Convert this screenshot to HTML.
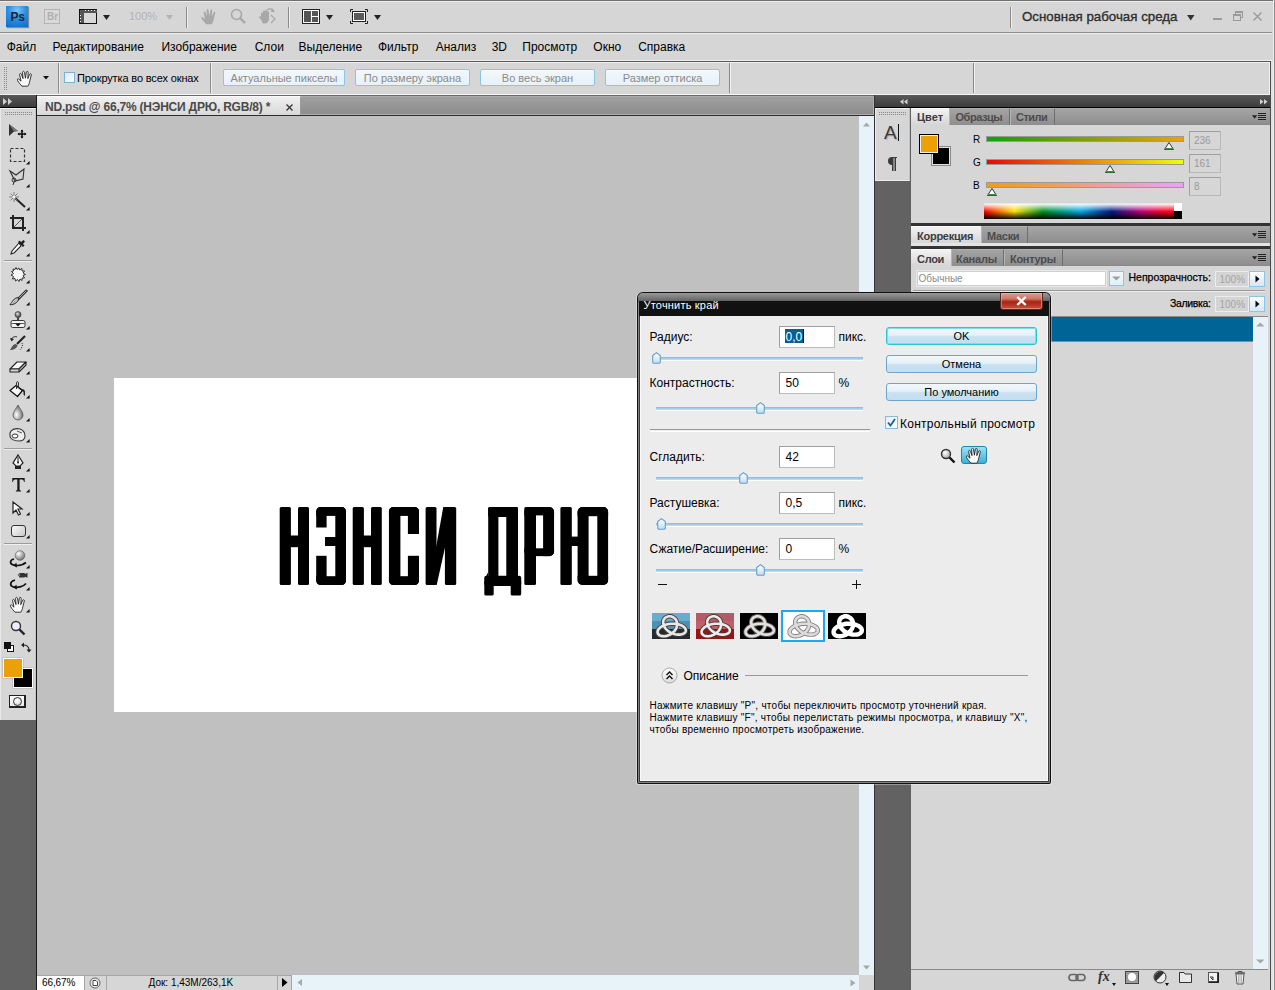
<!DOCTYPE html>
<html><head><meta charset="utf-8">
<style>
*{margin:0;padding:0;box-sizing:border-box}
html,body{width:1275px;height:990px;overflow:hidden;background:#d6d6d6;font-family:"Liberation Sans",sans-serif;font-size:12px;color:#000;position:relative}
.a{position:absolute}
.t{position:absolute;white-space:nowrap;line-height:1}
svg{position:absolute;overflow:visible}
.sep{position:absolute;width:1px;background:#8a8a8a;border-right:1px solid #f0f0f0;width:2px}
.ob{position:absolute;top:69px;height:17px;border:1px solid #8ec4e4;border-radius:2px;background:linear-gradient(#f2f8fc,#e6f1f9);color:#8a8a8a;font-size:11px;text-align:center;line-height:16px}
.tab{position:absolute;font-weight:bold;font-size:11px;color:#3c3c3c;line-height:1;white-space:nowrap}
.itab{position:absolute;background:linear-gradient(#a3a3a3,#8e8e8e);border-left:1px solid #b4b4b4;border-right:1px solid #6e6e6e}
.btn{position:absolute;left:886px;width:151px;height:18px;border:1px solid #6ea5c8;border-radius:3px;background:linear-gradient(#f3f9fd 0%,#e4f0f8 45%,#c9e1f1 55%,#c4def0 100%);font-size:11px;text-align:center;line-height:16px;color:#000}
.inp{position:absolute;left:779px;width:56px;height:22px;background:#fff;border:1px solid #8c8c8c;border-color:#a0a0a0 #bcbcbc #bcbcbc #a0a0a0}
.trk{position:absolute;height:4px;background:#a9cbe4;border-top:1px solid #8cbde0;border-bottom:1px solid #fff}
.thumb{position:absolute;width:9px;height:12px;border:1px solid #6a9cc4;border-radius:4px 4px 2px 2px;background:linear-gradient(90deg,#dbeaf6,#f4f9fd 50%,#c2dcef)}
</style></head><body>
<!-- ===== APP BAR ===== -->
<div class="a" style="left:0;top:0;width:1275px;height:1px;background:#707070"></div>

<div class="a" style="left:0;top:32px;width:1272px;height:1px;background:#8c8c8c"></div>
<div class="a" style="left:0;top:33px;width:1272px;height:1px;background:#ececec"></div>

<div class="a" style="left:0;top:1px;width:1272px;height:1px;background:#eeeeee"></div>
<div class="a" style="left:6px;top:6px;width:22px;height:21px;background:radial-gradient(circle at 50% 20%,#7cc4f6 0%,#2b8fe0 45%,#0a6cc4 100%);box-shadow:1px 1px 1px rgba(0,0,0,.35)"></div>
<div class="t" style="left:10.5px;top:10.5px;font-size:12px;font-weight:bold;color:#1a2636;letter-spacing:-0.2px">Ps</div>
<div class="a" style="left:44px;top:9px;width:16px;height:15px;border:1px solid #b4b4b4;background:#d9d9d9"></div>
<div class="t" style="left:47px;top:12px;font-size:10px;font-weight:bold;color:#b0b0b0">Br</div>
<svg style="left:79px;top:9px" width="19" height="15" viewBox="0 0 19 15">
 <rect x="0.5" y="0.5" width="17" height="14" fill="#d8d8d8" stroke="#111"/>
 <rect x="1" y="1" width="17" height="3" fill="#555"/>
 <rect x="1" y="1" width="4" height="13" fill="#555"/>
 <rect x="6" y="1" width="1" height="1" fill="#fff"/><rect x="9" y="1" width="1" height="1" fill="#fff"/><rect x="12" y="1" width="1" height="1" fill="#fff"/><rect x="15" y="1" width="1" height="1" fill="#fff"/>
 <rect x="1" y="6" width="1" height="1" fill="#fff"/><rect x="1" y="9" width="1" height="1" fill="#fff"/><rect x="1" y="12" width="1" height="1" fill="#fff"/>
</svg>
<svg style="left:103px;top:15px" width="8" height="5"><path d="M0 0H7L3.5 5Z" fill="#222"/></svg>
<div class="t" style="left:129px;top:11px;font-size:11px;color:#b4b4b4">100%</div>
<svg style="left:166px;top:15px" width="8" height="5"><path d="M0 0H7L3.5 5Z" fill="#b4b4b4"/></svg>
<div class="sep" style="left:186px;top:7px;height:21px"></div>
<svg style="left:200px;top:8px" width="18" height="17" viewBox="0 0 18 17"><path d="M6 16.2C4.5 14.5 3 13 1.6 10.6C1 9.6 1.6 8.6 2.6 9L5 11.2L3.6 4.6C3.3 3.4 5 3 5.4 4.2L7 8.6L6.6 2.4C6.5 1.1 8.3 1 8.5 2.3L9.4 8.2L10.4 2.2C10.6 1 12.3 1.2 12.2 2.5L11.8 8.6L13.6 4.4C14.1 3.3 15.7 3.8 15.3 5L13.9 10.6C13.4 13 13 14.5 11.8 16.2Z" fill="#a8a8a8"/></svg>
<svg style="left:230px;top:8px" width="17" height="17" viewBox="0 0 17 17"><circle cx="6.5" cy="6.5" r="5" fill="none" stroke="#a8a8a8" stroke-width="1.6"/><path d="M10 10L15 15" stroke="#a8a8a8" stroke-width="2.4"/></svg>
<svg style="left:258px;top:7px" width="19" height="18" viewBox="0 0 19 18"><path d="M3 10V6.5a1 1 0 0 1 2 0V9V4.5a1 1 0 0 1 2 0V9V4a1 1 0 0 1 2 0V9V5a1 1 0 0 1 2 0V11c0 3.5-1.6 5.5-4.5 5.5S4.8 15.5 3.2 13L1 10.5a1 1 0 0 1 1.6-1z" fill="#a8a8a8"/><path d="M9 3C12 1 15 2 16 5" fill="none" stroke="#a8a8a8" stroke-width="1.2"/><path d="M14 1l3 4-4 0z" fill="#a8a8a8"/><path d="M13 8l4 4-4 4" fill="none" stroke="#a8a8a8" stroke-width="1.2"/></svg>
<div class="sep" style="left:288px;top:7px;height:21px"></div>
<svg style="left:302px;top:9px" width="19" height="16" viewBox="0 0 19 16"><rect x="0.5" y="0.5" width="17" height="14" fill="#fff" stroke="#222"/><rect x="2" y="2" width="7" height="11" fill="#555"/><rect x="10" y="2" width="6" height="5" fill="#555"/><rect x="10" y="8" width="6" height="5" fill="#555"/></svg>
<svg style="left:326px;top:15px" width="8" height="5"><path d="M0 0H7L3.5 5Z" fill="#222"/></svg>
<svg style="left:350px;top:9px" width="19" height="16" viewBox="0 0 19 16"><path d="M0.5 3V0.5H3M15 0.5H17.5V3M17.5 12V14.5H15M3 14.5H0.5V12" fill="none" stroke="#222"/><rect x="2.5" y="2.5" width="13" height="10" fill="#fff" stroke="#222"/><rect x="4" y="4" width="10" height="7" fill="#5a5a5a"/></svg>
<svg style="left:374px;top:15px" width="8" height="5"><path d="M0 0H7L3.5 5Z" fill="#222"/></svg>
<div class="sep" style="left:1010px;top:7px;height:21px"></div>
<div class="t" style="left:1022px;top:10px;font-size:13.3px;color:#2e2e2e;-webkit-text-stroke:0.35px #2e2e2e">Основная рабочая среда</div>
<svg style="left:1187px;top:15px" width="8" height="6"><path d="M0 0H7.5L3.75 5.5Z" fill="#333"/></svg>
<div class="a" style="left:1213px;top:18px;width:9px;height:2px;background:#9a9a9a"></div>
<svg style="left:1233px;top:11px" width="10" height="10" viewBox="0 0 10 10"><rect x="2.5" y="0.5" width="7" height="6" fill="none" stroke="#9a9a9a"/><rect x="2.5" y="0.5" width="7" height="1.5" fill="#9a9a9a"/><rect x="0.5" y="3.5" width="7" height="6" fill="#d6d6d6" stroke="#9a9a9a"/><rect x="0.5" y="3.5" width="7" height="1.5" fill="#9a9a9a"/></svg>
<svg style="left:1253px;top:12px" width="9" height="9" viewBox="0 0 9 9"><path d="M0.5 0.5L8.5 8.5M8.5 0.5L0.5 8.5" stroke="#9a9a9a" stroke-width="1.4"/></svg>

<!-- ===== MENU ===== -->
<div class="t" style="left:6.7px;top:40.5px;font-size:12px">Файл</div>
<div class="t" style="left:52.5px;top:40.5px;font-size:12px">Редактирование</div>
<div class="t" style="left:161.4px;top:40.5px;font-size:12px">Изображение</div>
<div class="t" style="left:254.7px;top:40.5px;font-size:12px">Слои</div>
<div class="t" style="left:298.6px;top:40.5px;font-size:12px">Выделение</div>
<div class="t" style="left:378.0px;top:40.5px;font-size:12px">Фильтр</div>
<div class="t" style="left:435.7px;top:40.5px;font-size:12px">Анализ</div>
<div class="t" style="left:491.7px;top:40.5px;font-size:12px">3D</div>
<div class="t" style="left:522.3px;top:40.5px;font-size:12px">Просмотр</div>
<div class="t" style="left:593.3px;top:40.5px;font-size:12px">Окно</div>
<div class="t" style="left:638.2px;top:40.5px;font-size:12px">Справка</div>

<!-- ===== OPTIONS BAR ===== -->
<div class="a" style="left:0;top:60px;width:1272px;height:1px;background:#f0f0f0"></div>
<div class="a" style="left:0;top:61px;width:1271px;height:1px;background:#555"></div>
<div class="a" style="left:0;top:62px;width:1269px;height:1px;background:#f2f2f2"></div>
<div class="a" style="left:1269px;top:62px;width:1px;height:33px;background:#f2f2f2"></div>

<div class="a" style="left:0;top:94px;width:1272px;height:1px;background:#f4f4f4"></div>

<svg style="left:4px;top:67px" width="3" height="24"><defs><pattern id="gpo" width="2" height="2" patternUnits="userSpaceOnUse"><rect width="1" height="1" fill="#8a8a8a"/></pattern></defs><rect width="3" height="24" fill="url(#gpo)"/></svg>
<svg style="left:16px;top:70px" width="18" height="17" viewBox="0 0 18 17"><path d="M6 16.2C4.5 14.5 3 13 1.6 10.6C1 9.6 1.6 8.6 2.6 9L5 11.2L3.6 4.6C3.3 3.4 5 3 5.4 4.2L7 8.6L6.6 2.4C6.5 1.1 8.3 1 8.5 2.3L9.4 8.2L10.4 2.2C10.6 1 12.3 1.2 12.2 2.5L11.8 8.6L13.6 4.4C14.1 3.3 15.7 3.8 15.3 5L13.9 10.6C13.4 13 13 14.5 11.8 16.2Z" fill="#fafafa" stroke="#222" stroke-width="0.9"/></svg>
<svg style="left:43px;top:76px" width="6" height="4"><path d="M0 0H6L3 3.5Z" fill="#111"/></svg>
<div class="sep" style="left:58px;top:63px;height:30px"></div>
<div class="a" style="left:64px;top:72px;width:11px;height:11px;border:1px solid #7fb2d8;background:linear-gradient(135deg,#dcecf8,#f8fbfe)"></div>
<div class="t" style="left:77px;top:72.6px;font-size:11px;letter-spacing:-0.14px">Прокрутка во всех окнах</div>
<div class="sep" style="left:210px;top:63px;height:30px"></div>
<div class="ob" style="left:223px;width:122px">Актуальные пикселы</div>
<div class="ob" style="left:355px;width:115px">По размеру экрана</div>
<div class="ob" style="left:480px;width:115px">Во весь экран</div>
<div class="ob" style="left:605px;width:115px">Размер оттиска</div>
<div class="sep" style="left:729px;top:63px;height:30px"></div>
<div class="sep" style="left:973px;top:63px;height:30px"></div>

<!-- ===== DARK BG ===== -->
<div class="a" style="left:0;top:95px;width:1275px;height:895px;background:#626262"></div>

<div class="a" style="left:0;top:95px;width:36px;height:12px;background:linear-gradient(#585858,#3c3c3c)"></div>
<svg style="left:3px;top:98px" width="10" height="7"><path d="M0 0L4 3.5L0 7ZM5 0L9 3.5L5 7Z" fill="#d0d0d0"/></svg>
<div class="a" style="left:0;top:107px;width:36px;height:1px;background:#000"></div>
<div class="a" style="left:0;top:108px;width:36px;height:612px;background:#d6d6d6;border-top:1px solid #f2f2f2;border-left:1px solid #e8e8e8;border-right:1px solid #c4c4c4"></div>
<svg style="left:5px;top:112px" width="27" height="3"><defs><pattern id="gp5112" width="2" height="2" patternUnits="userSpaceOnUse"><rect width="1" height="1" fill="#8a8a8a"/></pattern></defs><rect width="27" height="3" fill="url(#gp5112)"/></svg>
<div class="a" style="left:36px;top:95px;width:1px;height:895px;background:#1a1a1a"></div>
<!-- icons -->
<svg style="left:8px;top:123px" width="20" height="16" viewBox="0 0 20 16"><path d="M1 1L10 8L6 8.5L1 13Z" fill="#333"/><path d="M1 1L10 8L6 8.5Z" fill="#777"/><path d="M14 7V15M10 11H18" stroke="#111" stroke-width="1.6"/><path d="M12.5 8.5L14 6.5L15.5 8.5ZM12.5 13.5L14 15.5L15.5 13.5ZM11.5 9.5L9.5 11L11.5 12.5ZM16.5 9.5L18.5 11L16.5 12.5Z" fill="#111"/></svg>
<svg style="left:9px;top:147px" width="17" height="16"><rect x="1.5" y="1.5" width="14" height="13" fill="none" stroke="#333" stroke-width="1.2" stroke-dasharray="3 2"/></svg>
<svg style="left:26px;top:161px" width="4" height="4"><path d="M3.6 0V3.6H0Z" fill="#111"/></svg>
<svg style="left:9px;top:168px" width="18" height="18" viewBox="0 0 18 18"><path d="M1 3L7 7L15 1L14 11L6 13L1 3Z" fill="none" stroke="#333" stroke-width="1.1"/><circle cx="5" cy="12" r="2" fill="none" stroke="#333"/><path d="M5 14L4 17" stroke="#333"/></svg>
<svg style="left:26px;top:184px" width="4" height="4"><path d="M3.6 0V3.6H0Z" fill="#111"/></svg>
<svg style="left:8px;top:191px" width="19" height="17" viewBox="0 0 19 17"><path d="M6 6L17 16" stroke="#222" stroke-width="2"/><path d="M6 1V11M1 6H11M2.5 2.5L9.5 9.5M9.5 2.5L2.5 9.5" stroke="#777" stroke-width="0.9"/><circle cx="6" cy="6" r="1.5" fill="#fff"/></svg>
<svg style="left:26px;top:207px" width="4" height="4"><path d="M3.6 0V3.6H0Z" fill="#111"/></svg>
<svg style="left:9px;top:215px" width="18" height="17" viewBox="0 0 18 17"><path d="M4 0V13H17M1 3H14V16" fill="none" stroke="#222" stroke-width="2"/><path d="M5 12L13 4" stroke="#555" stroke-width="1"/></svg>
<svg style="left:26px;top:230px" width="4" height="4"><path d="M3.6 0V3.6H0Z" fill="#111"/></svg>
<svg style="left:9px;top:239px" width="18" height="17" viewBox="0 0 18 17"><path d="M10 4L3 12L2 15L5 14L12 7Z" fill="#fff" stroke="#222" stroke-width="1.1"/><path d="M9 3L14 8L15.5 6.5L14 5L16 2.5L14.5 1L12 3L10.5 1.5Z" fill="#222"/></svg>
<svg style="left:26px;top:253px" width="4" height="4"><path d="M3.6 0V3.6H0Z" fill="#111"/></svg>
<div class="a" style="left:4px;top:260px;width:28px;height:1px;background:#9a9a9a;border-bottom:1px solid #f0f0f0;height:2px"></div>
<svg style="left:10px;top:266px" width="17" height="17" viewBox="0 0 17 17"><path d="M3 3L5 3.5L6 1.5L7 3.5L9 2L9.5 4L12 2.5L12 5L14.5 5L13 7L15.5 8.5L13 9.5L14.5 12L12 12L12 14.5L10 13L9 15.5L7.5 13.5L5.5 15L5 12.5L2.5 13L3.5 10.5L1 9L3.5 7.5L1.5 5.5L3.5 5Z" fill="#f6f6f6" stroke="#333" stroke-width="1" stroke-linejoin="round"/></svg>
<svg style="left:26px;top:280px" width="4" height="4"><path d="M3.6 0V3.6H0Z" fill="#111"/></svg>
<svg style="left:9px;top:290px" width="19" height="16" viewBox="0 0 19 16"><path d="M17.3 0.8L9.3 8.8" stroke="#222" stroke-width="2.6" stroke-linecap="round"/><path d="M17.3 0.8L9.3 8.8" stroke="#bdbdbd" stroke-width="1"/><path d="M8.6 7.6C5 8 3.5 11.5 1 14.8C4.8 14.8 9 12.6 9.8 9Z" fill="#b8b8b8" stroke="#222" stroke-width="1"/><path d="M7 9.5C5 10.5 4 12 3 13.5" stroke="#f4f4f4" stroke-width="1"/></svg>
<svg style="left:26px;top:302px" width="4" height="4"><path d="M3.6 0V3.6H0Z" fill="#111"/></svg>
<svg style="left:9px;top:311px" width="18" height="18" viewBox="0 0 18 18"><defs><radialGradient id="stg" cx="40%" cy="35%" r="60%"><stop offset="0" stop-color="#ddd"/><stop offset="1" stop-color="#444"/></radialGradient></defs><circle cx="9" cy="3.6" r="3" fill="url(#stg)" stroke="#333" stroke-width="0.7"/><rect x="8" y="6.2" width="2" height="3.5" fill="#444"/><rect x="2" y="9.5" width="14" height="7" rx="1.8" fill="#f4f4f4" stroke="#333" stroke-width="1"/><path d="M2.5 12.5H15.5" stroke="#333" stroke-width="0.8"/><path d="M6 12.5H12L9 15.5Z" fill="#111"/></svg>
<svg style="left:26px;top:326px" width="4" height="4"><path d="M3.6 0V3.6H0Z" fill="#111"/></svg>
<svg style="left:9px;top:335px" width="18" height="17" viewBox="0 0 18 17"><path d="M16 1L8 9" stroke="#222" stroke-width="2.2"/><path d="M7 9C4 9 3 12 1 15C5 15 8 13 8.5 10.5Z" fill="#555"/><path d="M2 5C3 2 6 1 8 2" fill="none" stroke="#222"/><path d="M1 3L2.5 6.5L5 4Z" fill="#222"/><path d="M13 8C14 10 13 13 11 15" fill="none" stroke="#222" stroke-dasharray="1 1"/></svg>
<svg style="left:26px;top:348px" width="4" height="4"><path d="M3.6 0V3.6H0Z" fill="#111"/></svg>
<svg style="left:9px;top:360px" width="18" height="14" viewBox="0 0 18 14"><path d="M1 9L8 2H17L10 9Z" fill="#fafafa" stroke="#222" stroke-width="1.1" stroke-linejoin="round"/><path d="M1 9V12H10L17 5V2L10 9Z" fill="#d8d8d8" stroke="#222" stroke-width="1.1" stroke-linejoin="round"/><path d="M10 9V12" stroke="#222"/></svg>
<svg style="left:26px;top:371px" width="4" height="4"><path d="M3.6 0V3.6H0Z" fill="#111"/></svg>
<svg style="left:9px;top:381px" width="18" height="17" viewBox="0 0 18 17"><path d="M1 9.5L7 4.5L13.5 9.5L8.5 15.5Z" fill="#f6f6f6" stroke="#111" stroke-width="1.2" stroke-linejoin="round"/><path d="M7 4.5L13.5 9.5" stroke="#111" stroke-width="1.2"/><path d="M7.5 8V1.5C7.5 0.5 9.5 0.5 9.5 1.5V7" fill="none" stroke="#333" stroke-width="1"/><path d="M12.5 8.5C14.5 7.5 16 9 16 11V15L14.5 13.5V11Z" fill="#222"/></svg>
<svg style="left:26px;top:395px" width="4" height="4"><path d="M3.6 0V3.6H0Z" fill="#111"/></svg>
<svg style="left:11px;top:404px" width="14" height="17" viewBox="0 0 14 17"><defs><radialGradient id="dg" cx="35%" cy="65%" r="60%"><stop offset="0" stop-color="#fff"/><stop offset="1" stop-color="#777"/></radialGradient></defs><path d="M7 1C5 5 2 8 2 11A5 5 0 0 0 12 11C12 8 9 5 7 1Z" fill="url(#dg)" stroke="#555" stroke-width="0.8"/></svg>
<svg style="left:26px;top:418px" width="4" height="4"><path d="M3.6 0V3.6H0Z" fill="#111"/></svg>
<svg style="left:8px;top:427px" width="19" height="15" viewBox="0 0 19 15"><path d="M2 6C3 2 8 1 12 2C15 3 17 6 17 9C17 12 15 14 11 14C6 14 2 12 2 9Z" fill="#eee" stroke="#333" stroke-width="1.1"/><ellipse cx="7" cy="9" rx="3" ry="2" fill="#fff" stroke="#333"/><path d="M9 4L14 6" stroke="#555"/></svg>
<svg style="left:26px;top:439px" width="4" height="4"><path d="M3.6 0V3.6H0Z" fill="#111"/></svg>
<div class="a" style="left:4px;top:448px;width:28px;height:2px;background:#9a9a9a;border-bottom:1px solid #f0f0f0"></div>
<svg style="left:11px;top:454px" width="14" height="17" viewBox="0 0 14 17"><path d="M7 1L12 9L9 12H5L2 9Z" fill="#f4f4f4" stroke="#222" stroke-width="1.2"/><path d="M7 3V8" stroke="#222"/><circle cx="7" cy="8.5" r="1" fill="#222"/><rect x="4" y="12" width="6" height="3" fill="#222"/></svg>
<svg style="left:26px;top:468px" width="4" height="4"><path d="M3.6 0V3.6H0Z" fill="#111"/></svg>
<svg style="left:12px;top:478px" width="13" height="14" viewBox="0 0 13 14"><path d="M0.3 0H12.7V4H12C11.8 2.5 11.3 1.6 9.8 1.6H7.6V11.6C7.6 12.4 8 12.6 9 12.6V13.4H3.9V12.6C4.9 12.6 5.3 12.4 5.3 11.6V1.6H3.2C1.7 1.6 1.2 2.5 1 4H0.3Z" fill="#1a1a1a"/></svg>
<svg style="left:26px;top:489px" width="4" height="4"><path d="M3.6 0V3.6H0Z" fill="#111"/></svg>
<svg style="left:12px;top:501px" width="11" height="15" viewBox="0 0 11 15"><path d="M1 1V12L4 9L6.5 14L8.5 13L6 8H10Z" fill="#fff" stroke="#222" stroke-width="1.2"/></svg>
<svg style="left:26px;top:512px" width="4" height="4"><path d="M3.6 0V3.6H0Z" fill="#111"/></svg>
<div class="a" style="left:11px;top:525px;width:15px;height:12px;border:1px solid #333;border-radius:3px;background:linear-gradient(135deg,#fafafa,#c8c8c8)"></div>
<svg style="left:26px;top:535px" width="4" height="4"><path d="M3.6 0V3.6H0Z" fill="#111"/></svg>
<div class="a" style="left:4px;top:543px;width:28px;height:2px;background:#9a9a9a;border-bottom:1px solid #f0f0f0"></div>
<svg style="left:8px;top:550px" width="20" height="18" viewBox="0 0 20 18"><defs><radialGradient id="sph" cx="35%" cy="30%" r="70%"><stop offset="0" stop-color="#fff"/><stop offset="1" stop-color="#777"/></radialGradient></defs><circle cx="12" cy="5.5" r="4.8" fill="url(#sph)" stroke="#555" stroke-width="0.6"/><path d="M6 9C1.5 10 1.5 14 5.5 15C9.5 16 15 15 18 12.5" fill="none" stroke="#111" stroke-width="1.7"/><path d="M8.5 12.8L4.8 15.6L9 17.6Z" fill="#111"/></svg>
<svg style="left:26px;top:565px" width="4" height="4"><path d="M3.6 0V3.6H0Z" fill="#111"/></svg>
<svg style="left:8px;top:572px" width="20" height="18" viewBox="0 0 20 18"><rect x="11" y="1" width="6" height="4.5" rx="0.8" fill="#333"/><path d="M16.5 2.2L19.5 0.8V5.8L16.5 4.4Z" fill="#333"/><circle cx="11" cy="3" r="1.3" fill="#777"/><path d="M7 8C1.5 9.5 1.5 14 5.5 15C9.5 16 15 15 18 11.5" fill="none" stroke="#111" stroke-width="1.7"/><path d="M8.5 12.8L4.8 15.6L9 17.6Z" fill="#111"/></svg>
<svg style="left:26px;top:587px" width="4" height="4"><path d="M3.6 0V3.6H0Z" fill="#111"/></svg>
<svg style="left:9px;top:596px" width="18" height="16" viewBox="0 0 18 16"><path d="M6 16.2C4.5 14.5 3 13 1.6 10.6C1 9.6 1.6 8.6 2.6 9L5 11.2L3.6 4.6C3.3 3.4 5 3 5.4 4.2L7 8.6L6.6 2.4C6.5 1.1 8.3 1 8.5 2.3L9.4 8.2L10.4 2.2C10.6 1 12.3 1.2 12.2 2.5L11.8 8.6L13.6 4.4C14.1 3.3 15.7 3.8 15.3 5L13.9 10.6C13.4 13 13 14.5 11.8 16.2Z" fill="#fafafa" stroke="#222" stroke-width="0.9"/></svg>
<svg style="left:26px;top:609px" width="4" height="4"><path d="M3.6 0V3.6H0Z" fill="#111"/></svg>
<svg style="left:10px;top:620px" width="16" height="16" viewBox="0 0 16 16"><circle cx="6" cy="6" r="4.5" fill="#eef" stroke="#333" stroke-width="1.4"/><path d="M9.5 9.5L14.5 14.5" stroke="#222" stroke-width="2.4"/></svg>
<svg style="left:4px;top:642px" width="10" height="11"><rect x="3.5" y="3.5" width="6" height="6" fill="#fff" stroke="#111"/><rect x="0" y="0" width="7" height="7" fill="#111"/></svg>
<svg style="left:21px;top:642px" width="10" height="11" viewBox="0 0 10 11"><path d="M2 3C5 3 8 4 8 8" fill="none" stroke="#222" stroke-width="1.2"/><path d="M0 3L3 0.5V5.5ZM8 10.5L5.5 7.5H10.5Z" fill="#222"/></svg>
<div class="a" style="left:13px;top:668px;width:20px;height:20px;background:#000;border:1px solid #fff;box-shadow:0 0 1px rgba(0,0,0,.5)"></div>
<div class="a" style="left:3px;top:658px;width:20px;height:20px;background:#eca008;border:1px solid #fff;box-shadow:0 0 1px rgba(0,0,0,.5)"></div>
<div class="a" style="left:9px;top:695px;width:17px;height:13px;border:1px solid #222;border-right-width:2px;border-bottom-width:2px;background:linear-gradient(#fff,#e8e8e8)"></div>
<div class="a" style="left:12.5px;top:696.5px;width:9px;height:9px;border:1px solid #333;border-radius:50%;background:radial-gradient(circle at 40% 35%,#fff,#ccc)"></div>


<!-- doc tab strip -->
<div class="a" style="left:37px;top:95px;width:837px;height:21px;background:linear-gradient(#a2a2a2,#8a8a8a)"></div>
<div class="a" style="left:37px;top:96px;width:837px;height:19px;border:1px solid #acacac;border-left:none"></div>
<div class="a" style="left:37px;top:95px;width:837px;height:1px;background:#6a6a6a"></div>
<div class="a" style="left:37px;top:115px;width:837px;height:1px;background:#2e2e2e"></div>
<div class="a" style="left:37px;top:96px;width:264px;height:19px;background:linear-gradient(#f0f0f0,#d8d8d8);border-top:1px solid #fafafa;border-right:1px solid #9a9a9a"></div>
<div class="t" style="left:45px;top:100.5px;font-size:12px;font-weight:bold;color:#4a4a4a;letter-spacing:-0.21px">ND.psd @ 66,7% (НЭНСИ ДРЮ, RGB/8) *</div>
<svg style="left:286px;top:104px" width="7" height="7"><path d="M0.5 0.5L6.5 6.5M6.5 0.5L0.5 6.5" stroke="#333" stroke-width="1.3"/></svg>
<!-- canvas -->
<div class="a" style="left:37px;top:116px;width:822px;height:859px;background:#c0c0c0"></div>
<div class="a" style="left:114px;top:378px;width:540px;height:334px;background:#fff"></div>
<svg style="left:0;top:0" width="1275" height="990" viewBox="0 0 1275 990"><defs><clipPath id="ce"><rect x="316.2" y="507" width="29.80" height="78.00" rx="4.5"/></clipPath><clipPath id="cs"><rect x="388.9" y="507" width="30.10" height="78.00" rx="4.5"/></clipPath><clipPath id="cr"><rect x="524.3" y="507" width="29.80" height="49.20" rx="5"/></clipPath><clipPath id="cu"><rect x="577.6" y="507" width="30.60" height="78.00" rx="5"/></clipPath></defs><g fill="#000"><rect x="279.7" y="507" width="11.20" height="78.00" rx="1.5"/><rect x="298" y="507" width="11.00" height="78.00" rx="1.5"/><rect x="289.9" y="535.5" width="9.10" height="11.70" rx="0"/><g clip-path="url(#ce)"><rect x="316" y="507" width="30.50" height="8.90" rx="0"/><rect x="316" y="507" width="10.60" height="20.50" rx="0"/><rect x="335.3" y="507" width="11.20" height="78.00" rx="0"/><rect x="316" y="576.2" width="30.50" height="8.80" rx="0"/><rect x="316" y="555.8" width="10.60" height="29.20" rx="0"/><rect x="325" y="537" width="11.00" height="9.00" rx="0"/></g><rect x="352.7" y="507" width="11.20" height="78.00" rx="1.5"/><rect x="371" y="507" width="10.80" height="78.00" rx="1.5"/><rect x="362.9" y="535.5" width="9.10" height="11.70" rx="0"/><g clip-path="url(#cs)"><rect x="388.5" y="507" width="31.00" height="8.90" rx="0"/><rect x="388.5" y="507" width="11.90" height="78.00" rx="0"/><rect x="388.5" y="576.2" width="31.00" height="8.80" rx="0"/><rect x="407.9" y="507" width="11.60" height="27.00" rx="0"/><rect x="407.9" y="555.8" width="11.60" height="29.20" rx="0"/></g><rect x="425.6" y="507" width="10.90" height="78.00" rx="1.5"/><rect x="444.9" y="507" width="11.30" height="78.00" rx="1.5"/><path d="M436 547.5L443.3 507H446V543L436.7 585H436Z"/><rect x="488.2" y="507" width="10.20" height="70.00" rx="1.5"/><rect x="506.3" y="507" width="11.70" height="70.00" rx="1.5"/><rect x="488.2" y="507" width="29.80" height="10.00" rx="1.5"/><rect x="484.3" y="575.8" width="36.90" height="10.20" rx="2"/><rect x="484.3" y="580" width="9.40" height="15.40" rx="1.5"/><rect x="510.7" y="580" width="10.50" height="15.40" rx="1.5"/><path d="M484.3 580L488.2 572V577Z"/><rect x="524.3" y="507" width="11.70" height="78.00" rx="1.5"/><g clip-path="url(#cr)"><rect x="524" y="507" width="30.50" height="8.40" rx="0"/><rect x="543.1" y="507" width="11.40" height="49.50" rx="0"/><rect x="524" y="548.3" width="30.50" height="8.20" rx="0"/></g><rect x="560.4" y="507" width="11.40" height="78.00" rx="1.5"/><rect x="570" y="536.6" width="10.00" height="9.40" rx="0"/><g clip-path="url(#cu)"><rect x="577" y="507" width="11.60" height="78.00" rx="0"/><rect x="597.3" y="507" width="11.20" height="78.00" rx="0"/><rect x="577" y="507" width="31.50" height="9.20" rx="0"/><rect x="577" y="575.8" width="31.50" height="9.20" rx="0"/></g></g></svg>
<!-- v scroll -->
<div class="a" style="left:859px;top:116px;width:15px;height:859px;background:#e8f2f9"></div>
<svg style="left:863px;top:122px" width="8" height="5"><path d="M0 4.5H7L3.5 0.5Z" fill="#a8a8a8"/></svg>
<svg style="left:863px;top:965px" width="8" height="5"><path d="M0 0.5H7L3.5 4.5Z" fill="#a8a8a8"/></svg>
<!-- status / h scroll -->
<div class="a" style="left:37px;top:975px;width:837px;height:15px;background:#e8f2f9"></div>
<div class="a" style="left:37px;top:975px;width:255px;height:1px;background:#a6a6a6"></div>
<div class="a" style="left:37px;top:976px;width:47px;height:14px;background:#fff"></div>
<div class="t" style="left:42px;top:978.3px;font-size:10px;letter-spacing:-0.1px">66,67%</div>
<div class="a" style="left:84px;top:976px;width:1px;height:14px;background:#a6a6a6"></div>
<div class="a" style="left:85px;top:976px;width:21px;height:14px;background:#d6d6d6"></div>
<svg style="left:89px;top:977px" width="12" height="12" viewBox="0 0 12 12"><circle cx="6" cy="6" r="5" fill="#e8e8e8" stroke="#666"/><path d="M4 3.5H7L8.5 5V8.5H4Z" fill="#fff" stroke="#333" stroke-width="0.9"/></svg>
<div class="a" style="left:106px;top:976px;width:1px;height:14px;background:#a6a6a6"></div>
<div class="a" style="left:107px;top:976px;width:170px;height:14px;background:#d6d6d6"></div>
<div class="t" style="left:148.5px;top:978px;font-size:10px">Док: 1,43M/263,1K</div>
<div class="a" style="left:277px;top:976px;width:1px;height:14px;background:#a6a6a6"></div>
<div class="a" style="left:278px;top:976px;width:13px;height:14px;background:#d6d6d6"></div>
<svg style="left:282px;top:978px" width="6" height="10"><path d="M0 0V9L5.5 4.5Z" fill="#000"/></svg>
<div class="a" style="left:291px;top:975px;width:1px;height:15px;background:#a6a6a6"></div>
<svg style="left:297px;top:979px" width="6" height="8"><path d="M5 0V7L0.5 3.5Z" fill="#a8a8a8"/></svg>
<svg style="left:850px;top:979px" width="6" height="8"><path d="M0.5 0.5V7.5L5.5 4Z" fill="#a8a8a8"/></svg>
<div class="a" style="left:859px;top:975px;width:15px;height:15px;background:#d6d6d6"></div>
<div class="a" style="left:874px;top:95px;width:1px;height:895px;background:#333"></div>


<div class="a" style="left:875px;top:95px;width:396px;height:12px;background:linear-gradient(#585858,#3c3c3c)"></div>
<div class="a" style="left:875px;top:107px;width:396px;height:1px;background:#000"></div>
<svg style="left:900px;top:99px" width="8" height="6"><path d="M3.5 0V5.5L0 2.75ZM7.5 0V5.5L4 2.75Z" fill="#d0d0d0"/></svg>
<svg style="left:1260px;top:99px" width="8" height="6"><path d="M0 0V5.5L3.5 2.75ZM4 0V5.5L7.5 2.75Z" fill="#d0d0d0"/></svg>



<!-- mini panel -->
<div class="a" style="left:875px;top:108px;width:35px;height:73px;background:#d6d6d6;border-top:1px solid #f2f2f2;border-left:1px solid #ececec;border-right:1px solid #c0c0c0;border-bottom:1px solid #ececec"></div>
<svg style="left:879px;top:112px" width="27" height="3"><defs><pattern id="gp879112" width="2" height="2" patternUnits="userSpaceOnUse"><rect width="1" height="1" fill="#8a8a8a"/></pattern></defs><rect width="27" height="3" fill="url(#gp879112)"/></svg>
<div class="t" style="left:884px;top:123px;font-size:19px;color:#3a3a3a;text-shadow:1px 1px 1px rgba(0,0,0,.2)">A</div>
<div class="a" style="left:898px;top:124px;width:1px;height:17px;background:#111"></div>
<svg style="left:886px;top:156px" width="12" height="16" viewBox="0 0 12 16"><path d="M6 1H11V2H10V15H8.5V2H7.5V15H6V9A4 4 0 0 1 6 1Z" fill="#3a3a3a"/></svg>
<!-- COLOR PANEL -->
<div class="a" style="left:911px;top:108px;width:359px;height:17px;background:linear-gradient(#a6a6a6,#8e8e8e);border-bottom:1px solid #8a8a8a"></div>
<div class="a" style="left:911px;top:108px;width:38px;height:17px;background:linear-gradient(#f2f2f2,#d6d6d6);border-top:1px solid #fafafa"></div>
<div class="itab" style="left:949px;top:108px;width:61px;height:17px;border-top:1px solid #b0b0b0"></div>
<div class="itab" style="left:1010px;top:108px;width:45px;height:17px;border-top:1px solid #b0b0b0"></div>
<div class="tab" style="left:917px;top:112px;letter-spacing:0px">Цвет</div>
<div class="tab" style="left:955.5px;top:112px;color:#4c4c4c;letter-spacing:-0.45px">Образцы</div>
<div class="tab" style="left:1016px;top:112px;color:#4c4c4c;letter-spacing:-0.5px">Стили</div>
<svg style="left:1252px;top:113px" width="15" height="9" viewBox="0 0 15 9"><path d="M0 2.2H5.2L2.6 5.8Z" fill="#222"/><path d="M6 0.5H14M6 2.5H14M6 4.5H14M6 6.5H14" stroke="#222" stroke-width="1"/></svg>
<div class="a" style="left:911px;top:125px;width:359px;height:98px;background:#d6d6d6"></div>
<div class="a" style="left:931px;top:146px;width:20px;height:20px;background:#000;border:1px solid #8c8c8c;box-shadow:inset 0 0 0 1px #e0e0e0"></div>
<div class="a" style="left:919px;top:134px;width:20px;height:20px;background:#eca008;border:1px solid #000;box-shadow:inset 0 0 0 1px #eeeeee"></div>
<div class="t" style="left:973px;top:135px;font-size:10px">R</div>
<div class="t" style="left:973px;top:158px;font-size:10px">G</div>
<div class="t" style="left:973px;top:181px;font-size:10px">B</div>
<div class="a" style="left:986px;top:136px;width:198px;height:6px;border:1px solid #9a9a9a;background:linear-gradient(90deg,#10a010,#f0a000)"></div>
<div class="a" style="left:986px;top:159px;width:198px;height:6px;border:1px solid #9a9a9a;background:linear-gradient(90deg,#ec0808,#ecff08)"></div>
<div class="a" style="left:986px;top:182px;width:198px;height:6px;border:1px solid #9a9a9a;background:linear-gradient(90deg,#eca008,#eca0ff)"></div>
<svg style="left:1164px;top:142px" width="10" height="8" viewBox="0 0 10 8"><path d="M5 0.5L9.5 7.5H0.5Z" fill="#fff" stroke="#222" stroke-width="0.9"/><path d="M1.5 6H8.5V7.5H1.5Z" fill="#2a9a2a"/></svg>
<svg style="left:1105px;top:165px" width="10" height="8" viewBox="0 0 10 8"><path d="M5 0.5L9.5 7.5H0.5Z" fill="#fff" stroke="#222" stroke-width="0.9"/><path d="M1.5 6H8.5V7.5H1.5Z" fill="#2a9a2a"/></svg>
<svg style="left:987px;top:188px" width="10" height="8" viewBox="0 0 10 8"><path d="M5 0.5L9.5 7.5H0.5Z" fill="#fff" stroke="#222" stroke-width="0.9"/><path d="M1.5 6H8.5V7.5H1.5Z" fill="#2a9a2a"/></svg>
<div class="a" style="left:1189px;top:131px;width:32px;height:19px;border:1px solid #a8a8a8;border-color:#a0a0a0 #b8b8b8 #b8b8b8 #a0a0a0"></div>
<div class="a" style="left:1189px;top:154px;width:32px;height:19px;border:1px solid #a8a8a8;border-color:#a0a0a0 #b8b8b8 #b8b8b8 #a0a0a0"></div>
<div class="a" style="left:1189px;top:177px;width:32px;height:19px;border:1px solid #a8a8a8;border-color:#a0a0a0 #b8b8b8 #b8b8b8 #a0a0a0"></div>
<div class="t" style="left:1194px;top:135.5px;font-size:10px;color:#9a9a9a">236</div>
<div class="t" style="left:1194px;top:158.5px;font-size:10px;color:#9a9a9a">161</div>
<div class="t" style="left:1194px;top:181.5px;font-size:10px;color:#9a9a9a">8</div>
<div class="a" style="left:984px;top:203px;width:190px;height:16px;border-top:1px solid #e8e8e8;background:linear-gradient(rgba(255,255,255,.95),rgba(255,255,255,0) 50%,rgba(0,0,0,0) 50%,rgba(0,0,0,.95)),linear-gradient(90deg,#f00000 0%,#ffe000 16%,#009020 31%,#00a8e8 51%,#001a80 67%,#c0007a 83%,#ff0020 95%)"></div>
<div class="a" style="left:1174px;top:203px;width:8px;height:8px;background:#fff"></div>
<div class="a" style="left:1174px;top:211px;width:8px;height:8px;background:#000"></div>
<!-- separators -->
<div class="a" style="left:911px;top:223px;width:359px;height:3px;background:#333"></div>
<!-- CORRECTION -->
<div class="a" style="left:911px;top:226px;width:359px;height:17px;background:linear-gradient(#a6a6a6,#8e8e8e);border-bottom:1px solid #8a8a8a"></div>
<div class="a" style="left:911px;top:226px;width:70px;height:17px;background:linear-gradient(#f2f2f2,#d6d6d6);border-top:1px solid #fafafa"></div>
<div class="itab" style="left:981px;top:226px;width:47px;height:17px;border-top:1px solid #b0b0b0"></div>
<div class="tab" style="left:917px;top:230.5px;letter-spacing:-0.25px">Коррекция</div>
<div class="tab" style="left:987px;top:230.5px;color:#4c4c4c;letter-spacing:-0.3px">Маски</div>
<svg style="left:1252px;top:231px" width="15" height="9" viewBox="0 0 15 9"><path d="M0 2.2H5.2L2.6 5.8Z" fill="#222"/><path d="M6 0.5H14M6 2.5H14M6 4.5H14M6 6.5H14" stroke="#222" stroke-width="1"/></svg>
<div class="a" style="left:911px;top:243px;width:359px;height:3px;background:#e4e4e4"></div>
<div class="a" style="left:911px;top:246px;width:359px;height:3px;background:#333"></div>
<!-- LAYERS -->
<div class="a" style="left:911px;top:249px;width:359px;height:17px;background:linear-gradient(#a6a6a6,#8e8e8e);border-bottom:1px solid #8a8a8a"></div>
<div class="a" style="left:911px;top:249px;width:40px;height:17px;background:linear-gradient(#f2f2f2,#d6d6d6);border-top:1px solid #fafafa"></div>
<div class="itab" style="left:951px;top:249px;width:53px;height:17px;border-top:1px solid #b0b0b0"></div>
<div class="itab" style="left:1004px;top:249px;width:59px;height:17px;border-top:1px solid #b0b0b0"></div>
<div class="tab" style="left:917px;top:253.5px;letter-spacing:-0.3px">Слои</div>
<div class="tab" style="left:956px;top:253.5px;color:#4c4c4c;letter-spacing:-0.2px">Каналы</div>
<div class="tab" style="left:1010px;top:253.5px;color:#4c4c4c;letter-spacing:-0.3px">Контуры</div>
<svg style="left:1252px;top:254px" width="15" height="9" viewBox="0 0 15 9"><path d="M0 2.2H5.2L2.6 5.8Z" fill="#222"/><path d="M6 0.5H14M6 2.5H14M6 4.5H14M6 6.5H14" stroke="#222" stroke-width="1"/></svg>
<div class="a" style="left:911px;top:266px;width:359px;height:724px;background:#d6d6d6"></div>
<div class="a" style="left:916px;top:270px;width:191px;height:17px;background:#fff;border:1px solid #e8e8e8;outline:1px solid #d0d0d0;outline-offset:-2px"></div>
<div class="t" style="left:918.5px;top:274px;font-size:10px;color:#8a8a8a">Обычные</div>
<div class="a" style="left:1109px;top:271px;width:15px;height:15px;border:1px solid #8ec4e4;background:linear-gradient(#f2f8fc,#e2eef8)"></div>
<svg style="left:1112px;top:276px" width="9" height="5"><path d="M0 0.5H8.5L4.25 4.5Z" fill="#a0a0a0"/></svg>
<div class="t" style="left:1128.5px;top:272.3px;font-size:10.5px;letter-spacing:0px;-webkit-text-stroke:0.25px #000">Непрозрачность:</div>
<div class="a" style="left:1215px;top:271px;width:34px;height:16px;background:#d4d4d4;border:1px solid #ececec"></div>
<div class="t" style="left:1219.5px;top:274.5px;font-size:10px;color:#a4a4a4">100%</div>
<div class="a" style="left:1249px;top:271px;width:16px;height:16px;border:1px solid #8ec4e4;background:linear-gradient(#fafdff,#d4e8f6)"></div>
<svg style="left:1255px;top:275px" width="5" height="8"><path d="M0.5 0.5V7.5L4.5 4Z" fill="#000"/></svg>
<div class="a" style="left:913px;top:290px;width:352px;height:2px;background:#9a9a9a;border-bottom:1px solid #ececec"></div>
<div class="t" style="left:1170px;top:298.3px;font-size:10.5px;letter-spacing:-0.35px;-webkit-text-stroke:0.25px #000">Заливка:</div>
<div class="a" style="left:1215px;top:296px;width:34px;height:16px;background:#d4d4d4;border:1px solid #ececec"></div>
<div class="t" style="left:1219.5px;top:299.5px;font-size:10px;color:#a4a4a4">100%</div>
<div class="a" style="left:1249px;top:296px;width:16px;height:16px;border:1px solid #8ec4e4;background:linear-gradient(#fafdff,#d4e8f6)"></div>
<svg style="left:1255px;top:300px" width="5" height="8"><path d="M0.5 0.5V7.5L4.5 4Z" fill="#000"/></svg>
<div class="a" style="left:911px;top:316px;width:357px;height:1px;background:#8a8a8a"></div>
<div class="a" style="left:911px;top:317px;width:342px;height:24px;background:#006496"></div>
<div class="a" style="left:911px;top:341px;width:342px;height:1px;background:#8a8a8a"></div>
<div class="a" style="left:1253px;top:317px;width:15px;height:652px;background:#e8f2f9"></div>
<svg style="left:1256px;top:322px" width="9" height="5"><path d="M0 4.5H8.5L4.25 0.5Z" fill="#a8a8a8"/></svg>
<svg style="left:1256px;top:959px" width="9" height="5"><path d="M0 0.5H8.5L4.25 4.5Z" fill="#a8a8a8"/></svg>
<div class="a" style="left:911px;top:969px;width:357px;height:1px;background:#8a8a8a"></div>
<!-- bottom icons -->
<svg style="left:1068px;top:973px" width="18" height="9" viewBox="0 0 18 9"><rect x="1" y="1.5" width="9" height="6" rx="3" fill="none" stroke="#666" stroke-width="1.6"/><rect x="8" y="1.5" width="9" height="6" rx="3" fill="none" stroke="#666" stroke-width="1.6"/></svg>
<div class="t" style="left:1098px;top:970px;font-family:'Liberation Serif',serif;font-style:italic;font-weight:bold;font-size:14px;color:#333">fx</div>
<svg style="left:1112px;top:983px" width="4" height="3"><path d="M0 0H4L2 3Z" fill="#111"/></svg>
<div class="a" style="left:1125px;top:971px;width:14px;height:13px;background:#9a9a9a;border:1px solid #444"></div>
<div class="a" style="left:1128px;top:973px;width:8px;height:8px;border-radius:50%;background:#fff"></div>
<svg style="left:1153px;top:970px" width="16" height="16" viewBox="0 0 16 16"><circle cx="7" cy="7" r="6" fill="#eee" stroke="#333"/><path d="M11.2 2.8A6 6 0 0 0 2.8 11.2Z" fill="#333"/></svg>
<svg style="left:1165px;top:983px" width="4" height="3"><path d="M0 0H4L2 3Z" fill="#111"/></svg>
<svg style="left:1179px;top:971px" width="13" height="12" viewBox="0 0 13 12"><path d="M0.5 1.5H5L6 3H12.5V11.5H0.5Z" fill="#e8e8e8" stroke="#333"/></svg>
<svg style="left:1208px;top:972px" width="11" height="11" viewBox="0 0 11 11"><rect x="0.5" y="0.5" width="10" height="10" fill="#f4f4f4" stroke="#555"/><path d="M10 1V10H1" fill="none" stroke="#111" stroke-width="1.6"/><path d="M2 5H5V8" fill="none" stroke="#333"/><path d="M2.5 5.5L5 8" stroke="#333"/></svg>
<svg style="left:1234px;top:970px" width="12" height="15" viewBox="0 0 12 15"><path d="M1 3H11" stroke="#555" stroke-width="1.4"/><path d="M4 3V1.5H8V3" fill="none" stroke="#555"/><path d="M2 4L3 14H9L10 4Z" fill="#f4f4f4" stroke="#555"/><path d="M4.5 5V13M6 5V13M7.5 5V13" stroke="#999" stroke-width="0.7"/></svg>


<div class="a" style="left:636px;top:291px;width:416px;height:494px;border-radius:7px 7px 2px 2px;border:1px solid rgba(255,255,255,.35);border-top-color:transparent"></div>
<div class="a" style="left:637px;top:292px;width:414px;height:492px;background:#111;border-radius:6px 6px 2px 2px"></div>
<div class="a" style="left:638px;top:293px;width:412px;height:490px;background:#848484;border-radius:5px 5px 1px 1px"></div>
<div class="a" style="left:638px;top:293px;width:412px;height:9px;background:linear-gradient(#9a9a9a,#5c5c5c);border-radius:5px 5px 0 0"></div>
<div class="a" style="left:639px;top:301px;width:410px;height:481px;background:#3c3c3c"></div>
<div class="a" style="left:639px;top:301px;width:410px;height:15px;background:#111"></div>
<div class="a" style="left:640px;top:316px;width:408px;height:465px;background:#ececec;border:1px solid #fafafa;border-top:none"></div>
<div class="t" style="left:643.5px;top:299.8px;font-size:11px;color:#fff;letter-spacing:0.2px">Уточнить край</div>
<div class="a" style="left:1000px;top:293px;width:43px;height:17px;border:1px solid #5a2a22;border-top:none;border-radius:0 0 3px 3px;background:linear-gradient(#dc9c90 0%,#cc7a6c 35%,#a82410 55%,#b83a28 80%,#c85848 100%);box-shadow:inset 0 0 0 1px rgba(255,190,180,.45)"></div>
<svg style="left:1016px;top:296px" width="11" height="10" viewBox="0 0 11 10"><path d="M1.3 1L9.7 9M9.7 1L1.3 9" stroke="#fff" stroke-width="2.4"/></svg>
<div class="t" style="left:649.5px;top:330.84px;font-size:12px;color:#000;">Радиус:</div>
<div class="inp" style="top:326px"></div><div class="a" style="left:785px;top:329px;width:18px;height:14px;background:#00609a"></div><div class="t" style="left:785.5px;top:330.84px;font-size:12px;color:#fff;">0,0</div><div class="a" style="left:803px;top:329px;width:1px;height:14px;background:#000"></div>
<div class="t" style="left:838.5px;top:330.84px;font-size:12px;color:#000;">пикс.</div>
<div class="a" style="left:652px;top:357px;width:211px;height:3px;background:linear-gradient(#84b8dc,#c6e0f2)"></div>
<div class="a" style="left:652px;top:360px;width:211px;height:1px;background:#fff"></div>
<svg style="left:652px;top:352px" width="10" height="12" viewBox="0 0 10 12"><defs><linearGradient id="tg358" x1="0" y1="0" x2="0" y2="1"><stop offset="0" stop-color="#f6fbfe"/><stop offset="0.5" stop-color="#e2f0fa"/><stop offset="1" stop-color="#bcdaf0"/></linearGradient></defs><path d="M0.7 3.5L4.5 0.6L8.3 3.5V10A1.3 1.3 0 0 1 7 11.3H2A1.3 1.3 0 0 1 0.7 10Z" fill="url(#tg358)" stroke="#6a9ec6" stroke-width="1.1"/></svg>
<div class="t" style="left:649.5px;top:376.84px;font-size:12px;color:#000;">Контрастность:</div>
<div class="inp" style="top:372px"></div><div class="t" style="left:785.5px;top:376.84px;font-size:12px;color:#000;">50</div>
<div class="t" style="left:838.5px;top:376.84px;font-size:12px;color:#000;">%</div>
<div class="a" style="left:656px;top:407px;width:207px;height:3px;background:linear-gradient(#84b8dc,#c6e0f2)"></div>
<div class="a" style="left:656px;top:410px;width:207px;height:1px;background:#fff"></div>
<svg style="left:756px;top:402px" width="10" height="12" viewBox="0 0 10 12"><defs><linearGradient id="tg408" x1="0" y1="0" x2="0" y2="1"><stop offset="0" stop-color="#f6fbfe"/><stop offset="0.5" stop-color="#e2f0fa"/><stop offset="1" stop-color="#bcdaf0"/></linearGradient></defs><path d="M0.7 3.5L4.5 0.6L8.3 3.5V10A1.3 1.3 0 0 1 7 11.3H2A1.3 1.3 0 0 1 0.7 10Z" fill="url(#tg408)" stroke="#6a9ec6" stroke-width="1.1"/></svg>
<div class="a" style="left:650px;top:429px;width:220px;height:1px;background:#9a9a9a"></div>
<div class="a" style="left:650px;top:431px;width:220px;height:1px;background:#fff"></div>
<div class="t" style="left:649.5px;top:450.84px;font-size:12px;color:#000;">Сгладить:</div>
<div class="inp" style="top:446px"></div><div class="t" style="left:785.5px;top:450.84px;font-size:12px;color:#000;">42</div>
<div class="a" style="left:656px;top:477px;width:207px;height:3px;background:linear-gradient(#84b8dc,#c6e0f2)"></div>
<div class="a" style="left:656px;top:480px;width:207px;height:1px;background:#fff"></div>
<svg style="left:739px;top:472px" width="10" height="12" viewBox="0 0 10 12"><defs><linearGradient id="tg478" x1="0" y1="0" x2="0" y2="1"><stop offset="0" stop-color="#f6fbfe"/><stop offset="0.5" stop-color="#e2f0fa"/><stop offset="1" stop-color="#bcdaf0"/></linearGradient></defs><path d="M0.7 3.5L4.5 0.6L8.3 3.5V10A1.3 1.3 0 0 1 7 11.3H2A1.3 1.3 0 0 1 0.7 10Z" fill="url(#tg478)" stroke="#6a9ec6" stroke-width="1.1"/></svg>
<div class="t" style="left:649.5px;top:496.84px;font-size:12px;color:#000;">Растушевка:</div>
<div class="inp" style="top:492px"></div><div class="t" style="left:785.5px;top:496.84px;font-size:12px;color:#000;">0,5</div>
<div class="t" style="left:838.5px;top:496.84px;font-size:12px;color:#000;">пикс.</div>
<div class="a" style="left:656px;top:523px;width:207px;height:3px;background:linear-gradient(#84b8dc,#c6e0f2)"></div>
<div class="a" style="left:656px;top:526px;width:207px;height:1px;background:#fff"></div>
<svg style="left:657px;top:518px" width="10" height="12" viewBox="0 0 10 12"><defs><linearGradient id="tg524" x1="0" y1="0" x2="0" y2="1"><stop offset="0" stop-color="#f6fbfe"/><stop offset="0.5" stop-color="#e2f0fa"/><stop offset="1" stop-color="#bcdaf0"/></linearGradient></defs><path d="M0.7 3.5L4.5 0.6L8.3 3.5V10A1.3 1.3 0 0 1 7 11.3H2A1.3 1.3 0 0 1 0.7 10Z" fill="url(#tg524)" stroke="#6a9ec6" stroke-width="1.1"/></svg>
<div class="t" style="left:649.5px;top:542.84px;font-size:12px;color:#000;">Сжатие/Расширение:</div>
<div class="inp" style="top:538px"></div><div class="t" style="left:785.5px;top:542.84px;font-size:12px;color:#000;">0</div>
<div class="t" style="left:838.5px;top:542.84px;font-size:12px;color:#000;">%</div>
<div class="a" style="left:656px;top:569px;width:207px;height:3px;background:linear-gradient(#84b8dc,#c6e0f2)"></div>
<div class="a" style="left:656px;top:572px;width:207px;height:1px;background:#fff"></div>
<svg style="left:756px;top:564px" width="10" height="12" viewBox="0 0 10 12"><defs><linearGradient id="tg570" x1="0" y1="0" x2="0" y2="1"><stop offset="0" stop-color="#f6fbfe"/><stop offset="0.5" stop-color="#e2f0fa"/><stop offset="1" stop-color="#bcdaf0"/></linearGradient></defs><path d="M0.7 3.5L4.5 0.6L8.3 3.5V10A1.3 1.3 0 0 1 7 11.3H2A1.3 1.3 0 0 1 0.7 10Z" fill="url(#tg570)" stroke="#6a9ec6" stroke-width="1.1"/></svg>
<div class="a" style="left:658px;top:584px;width:9px;height:1px;background:#111"></div>
<div class="a" style="left:852px;top:584px;width:9px;height:1px;background:#111"></div>
<div class="a" style="left:856px;top:580px;width:1px;height:9px;background:#111"></div>
<svg style="left:652px;top:613px;overflow:hidden" width="38" height="26" viewBox="0 0 38 26"><rect width="38" height="8" fill="#6aaccc"/><rect y="8" width="38" height="8" fill="#4e90b0"/><rect y="16" width="38" height="10" fill="#262a2c"/><path d="M18.3 10.8 L19.6 10.7 L21.0 10.7 L22.3 10.7 L23.6 10.9 L24.9 11.1 L26.2 11.3 L27.3 11.6 L28.4 12.0 L29.5 12.4 L30.4 12.9 L31.2 13.4 L32.0 14.0 L32.6 14.6 L33.1 15.2 L33.5 15.8 L33.7 16.5 L33.8 17.1 L33.8 17.7 L33.7 18.3 L33.5 18.9 L33.1 19.4 L32.6 19.9 L32.0 20.3 L31.3 20.7 L30.6 21.1 L29.7 21.3 L28.8 21.5 L27.8 21.6 L26.7 21.6 L25.6 21.6 L24.5 21.5 L23.3 21.3 L22.2 21.0 L21.0 20.6 L19.9 20.2 L18.8 19.6 L17.7 19.1 L16.7 18.4 L15.8 17.7 L14.9 16.9 L14.1 16.1 L13.4 15.3 L12.8 14.4 L12.3 13.5 L11.8 12.6 L11.5 11.7 L11.3 10.8 L11.2 9.9 L11.2 9.1 L11.3 8.2 L11.5 7.4 L11.8 6.7 L12.2 6.0 L12.7 5.4 L13.2 4.8 L13.9 4.4 L14.5 4.0 L15.3 3.7 L16.0 3.4 L16.8 3.3 L17.6 3.3 L18.5 3.3 L19.3 3.5 L20.1 3.7 L20.9 4.1 L21.6 4.5 L22.3 5.0 L22.9 5.6 L23.5 6.2 L24.0 6.9 L24.4 7.7 L24.7 8.5 L25.0 9.4 L25.1 10.3 L25.1 11.3 L25.1 12.2 L24.9 13.2 L24.7 14.1 L24.3 15.1 L23.8 16.0 L23.3 16.9 L22.6 17.8 L21.9 18.6 L21.1 19.4 L20.2 20.1 L19.3 20.8 L18.4 21.4 L17.4 21.9 L16.3 22.3 L15.3 22.7 L14.3 22.9 L13.2 23.1 L12.2 23.2 L11.2 23.2 L10.3 23.1 L9.4 23.0 L8.6 22.7 L7.9 22.4 L7.3 22.1 L6.7 21.6 L6.3 21.1 L5.9 20.6 L5.7 20.0 L5.6 19.3 L5.6 18.7 L5.7 18.0 L5.9 17.3 L6.3 16.6 L6.8 15.9 L7.4 15.3 L8.1 14.6 L8.9 14.0 L9.9 13.4 L10.9 12.9 L12.0 12.4 L13.1 11.9 L14.4 11.6 L15.6 11.3 L16.9 11.0 L18.3 10.8Z" fill="none" stroke="#4a4040" stroke-width="4.4"/><path d="M18.3 10.8 L19.6 10.7 L21.0 10.7 L22.3 10.7 L23.6 10.9 L24.9 11.1 L26.2 11.3 L27.3 11.6 L28.4 12.0 L29.5 12.4 L30.4 12.9 L31.2 13.4 L32.0 14.0 L32.6 14.6 L33.1 15.2 L33.5 15.8 L33.7 16.5 L33.8 17.1 L33.8 17.7 L33.7 18.3 L33.5 18.9 L33.1 19.4 L32.6 19.9 L32.0 20.3 L31.3 20.7 L30.6 21.1 L29.7 21.3 L28.8 21.5 L27.8 21.6 L26.7 21.6 L25.6 21.6 L24.5 21.5 L23.3 21.3 L22.2 21.0 L21.0 20.6 L19.9 20.2 L18.8 19.6 L17.7 19.1 L16.7 18.4 L15.8 17.7 L14.9 16.9 L14.1 16.1 L13.4 15.3 L12.8 14.4 L12.3 13.5 L11.8 12.6 L11.5 11.7 L11.3 10.8 L11.2 9.9 L11.2 9.1 L11.3 8.2 L11.5 7.4 L11.8 6.7 L12.2 6.0 L12.7 5.4 L13.2 4.8 L13.9 4.4 L14.5 4.0 L15.3 3.7 L16.0 3.4 L16.8 3.3 L17.6 3.3 L18.5 3.3 L19.3 3.5 L20.1 3.7 L20.9 4.1 L21.6 4.5 L22.3 5.0 L22.9 5.6 L23.5 6.2 L24.0 6.9 L24.4 7.7 L24.7 8.5 L25.0 9.4 L25.1 10.3 L25.1 11.3 L25.1 12.2 L24.9 13.2 L24.7 14.1 L24.3 15.1 L23.8 16.0 L23.3 16.9 L22.6 17.8 L21.9 18.6 L21.1 19.4 L20.2 20.1 L19.3 20.8 L18.4 21.4 L17.4 21.9 L16.3 22.3 L15.3 22.7 L14.3 22.9 L13.2 23.1 L12.2 23.2 L11.2 23.2 L10.3 23.1 L9.4 23.0 L8.6 22.7 L7.9 22.4 L7.3 22.1 L6.7 21.6 L6.3 21.1 L5.9 20.6 L5.7 20.0 L5.6 19.3 L5.6 18.7 L5.7 18.0 L5.9 17.3 L6.3 16.6 L6.8 15.9 L7.4 15.3 L8.1 14.6 L8.9 14.0 L9.9 13.4 L10.9 12.9 L12.0 12.4 L13.1 11.9 L14.4 11.6 L15.6 11.3 L16.9 11.0 L18.3 10.8Z" fill="none" stroke="#e8e8e8" stroke-width="2.6"/></svg>
<svg style="left:696px;top:613px;overflow:hidden" width="38" height="26" viewBox="0 0 38 26"><rect width="38" height="8" fill="#b45a66"/><rect y="8" width="38" height="8" fill="#c06068"/><rect y="16" width="38" height="10" fill="#9a1414"/><path d="M18.3 10.8 L19.6 10.7 L21.0 10.7 L22.3 10.7 L23.6 10.9 L24.9 11.1 L26.2 11.3 L27.3 11.6 L28.4 12.0 L29.5 12.4 L30.4 12.9 L31.2 13.4 L32.0 14.0 L32.6 14.6 L33.1 15.2 L33.5 15.8 L33.7 16.5 L33.8 17.1 L33.8 17.7 L33.7 18.3 L33.5 18.9 L33.1 19.4 L32.6 19.9 L32.0 20.3 L31.3 20.7 L30.6 21.1 L29.7 21.3 L28.8 21.5 L27.8 21.6 L26.7 21.6 L25.6 21.6 L24.5 21.5 L23.3 21.3 L22.2 21.0 L21.0 20.6 L19.9 20.2 L18.8 19.6 L17.7 19.1 L16.7 18.4 L15.8 17.7 L14.9 16.9 L14.1 16.1 L13.4 15.3 L12.8 14.4 L12.3 13.5 L11.8 12.6 L11.5 11.7 L11.3 10.8 L11.2 9.9 L11.2 9.1 L11.3 8.2 L11.5 7.4 L11.8 6.7 L12.2 6.0 L12.7 5.4 L13.2 4.8 L13.9 4.4 L14.5 4.0 L15.3 3.7 L16.0 3.4 L16.8 3.3 L17.6 3.3 L18.5 3.3 L19.3 3.5 L20.1 3.7 L20.9 4.1 L21.6 4.5 L22.3 5.0 L22.9 5.6 L23.5 6.2 L24.0 6.9 L24.4 7.7 L24.7 8.5 L25.0 9.4 L25.1 10.3 L25.1 11.3 L25.1 12.2 L24.9 13.2 L24.7 14.1 L24.3 15.1 L23.8 16.0 L23.3 16.9 L22.6 17.8 L21.9 18.6 L21.1 19.4 L20.2 20.1 L19.3 20.8 L18.4 21.4 L17.4 21.9 L16.3 22.3 L15.3 22.7 L14.3 22.9 L13.2 23.1 L12.2 23.2 L11.2 23.2 L10.3 23.1 L9.4 23.0 L8.6 22.7 L7.9 22.4 L7.3 22.1 L6.7 21.6 L6.3 21.1 L5.9 20.6 L5.7 20.0 L5.6 19.3 L5.6 18.7 L5.7 18.0 L5.9 17.3 L6.3 16.6 L6.8 15.9 L7.4 15.3 L8.1 14.6 L8.9 14.0 L9.9 13.4 L10.9 12.9 L12.0 12.4 L13.1 11.9 L14.4 11.6 L15.6 11.3 L16.9 11.0 L18.3 10.8Z" fill="none" stroke="#503838" stroke-width="4.4"/><path d="M18.3 10.8 L19.6 10.7 L21.0 10.7 L22.3 10.7 L23.6 10.9 L24.9 11.1 L26.2 11.3 L27.3 11.6 L28.4 12.0 L29.5 12.4 L30.4 12.9 L31.2 13.4 L32.0 14.0 L32.6 14.6 L33.1 15.2 L33.5 15.8 L33.7 16.5 L33.8 17.1 L33.8 17.7 L33.7 18.3 L33.5 18.9 L33.1 19.4 L32.6 19.9 L32.0 20.3 L31.3 20.7 L30.6 21.1 L29.7 21.3 L28.8 21.5 L27.8 21.6 L26.7 21.6 L25.6 21.6 L24.5 21.5 L23.3 21.3 L22.2 21.0 L21.0 20.6 L19.9 20.2 L18.8 19.6 L17.7 19.1 L16.7 18.4 L15.8 17.7 L14.9 16.9 L14.1 16.1 L13.4 15.3 L12.8 14.4 L12.3 13.5 L11.8 12.6 L11.5 11.7 L11.3 10.8 L11.2 9.9 L11.2 9.1 L11.3 8.2 L11.5 7.4 L11.8 6.7 L12.2 6.0 L12.7 5.4 L13.2 4.8 L13.9 4.4 L14.5 4.0 L15.3 3.7 L16.0 3.4 L16.8 3.3 L17.6 3.3 L18.5 3.3 L19.3 3.5 L20.1 3.7 L20.9 4.1 L21.6 4.5 L22.3 5.0 L22.9 5.6 L23.5 6.2 L24.0 6.9 L24.4 7.7 L24.7 8.5 L25.0 9.4 L25.1 10.3 L25.1 11.3 L25.1 12.2 L24.9 13.2 L24.7 14.1 L24.3 15.1 L23.8 16.0 L23.3 16.9 L22.6 17.8 L21.9 18.6 L21.1 19.4 L20.2 20.1 L19.3 20.8 L18.4 21.4 L17.4 21.9 L16.3 22.3 L15.3 22.7 L14.3 22.9 L13.2 23.1 L12.2 23.2 L11.2 23.2 L10.3 23.1 L9.4 23.0 L8.6 22.7 L7.9 22.4 L7.3 22.1 L6.7 21.6 L6.3 21.1 L5.9 20.6 L5.7 20.0 L5.6 19.3 L5.6 18.7 L5.7 18.0 L5.9 17.3 L6.3 16.6 L6.8 15.9 L7.4 15.3 L8.1 14.6 L8.9 14.0 L9.9 13.4 L10.9 12.9 L12.0 12.4 L13.1 11.9 L14.4 11.6 L15.6 11.3 L16.9 11.0 L18.3 10.8Z" fill="none" stroke="#ececec" stroke-width="2.6"/></svg>
<svg style="left:740px;top:613px;overflow:hidden" width="38" height="26" viewBox="0 0 38 26"><rect width="38" height="26" fill="#000"/><path d="M18.3 10.8 L19.6 10.7 L21.0 10.7 L22.3 10.7 L23.6 10.9 L24.9 11.1 L26.2 11.3 L27.3 11.6 L28.4 12.0 L29.5 12.4 L30.4 12.9 L31.2 13.4 L32.0 14.0 L32.6 14.6 L33.1 15.2 L33.5 15.8 L33.7 16.5 L33.8 17.1 L33.8 17.7 L33.7 18.3 L33.5 18.9 L33.1 19.4 L32.6 19.9 L32.0 20.3 L31.3 20.7 L30.6 21.1 L29.7 21.3 L28.8 21.5 L27.8 21.6 L26.7 21.6 L25.6 21.6 L24.5 21.5 L23.3 21.3 L22.2 21.0 L21.0 20.6 L19.9 20.2 L18.8 19.6 L17.7 19.1 L16.7 18.4 L15.8 17.7 L14.9 16.9 L14.1 16.1 L13.4 15.3 L12.8 14.4 L12.3 13.5 L11.8 12.6 L11.5 11.7 L11.3 10.8 L11.2 9.9 L11.2 9.1 L11.3 8.2 L11.5 7.4 L11.8 6.7 L12.2 6.0 L12.7 5.4 L13.2 4.8 L13.9 4.4 L14.5 4.0 L15.3 3.7 L16.0 3.4 L16.8 3.3 L17.6 3.3 L18.5 3.3 L19.3 3.5 L20.1 3.7 L20.9 4.1 L21.6 4.5 L22.3 5.0 L22.9 5.6 L23.5 6.2 L24.0 6.9 L24.4 7.7 L24.7 8.5 L25.0 9.4 L25.1 10.3 L25.1 11.3 L25.1 12.2 L24.9 13.2 L24.7 14.1 L24.3 15.1 L23.8 16.0 L23.3 16.9 L22.6 17.8 L21.9 18.6 L21.1 19.4 L20.2 20.1 L19.3 20.8 L18.4 21.4 L17.4 21.9 L16.3 22.3 L15.3 22.7 L14.3 22.9 L13.2 23.1 L12.2 23.2 L11.2 23.2 L10.3 23.1 L9.4 23.0 L8.6 22.7 L7.9 22.4 L7.3 22.1 L6.7 21.6 L6.3 21.1 L5.9 20.6 L5.7 20.0 L5.6 19.3 L5.6 18.7 L5.7 18.0 L5.9 17.3 L6.3 16.6 L6.8 15.9 L7.4 15.3 L8.1 14.6 L8.9 14.0 L9.9 13.4 L10.9 12.9 L12.0 12.4 L13.1 11.9 L14.4 11.6 L15.6 11.3 L16.9 11.0 L18.3 10.8Z" fill="none" stroke="#6a6060" stroke-width="4.4"/><path d="M18.3 10.8 L19.6 10.7 L21.0 10.7 L22.3 10.7 L23.6 10.9 L24.9 11.1 L26.2 11.3 L27.3 11.6 L28.4 12.0 L29.5 12.4 L30.4 12.9 L31.2 13.4 L32.0 14.0 L32.6 14.6 L33.1 15.2 L33.5 15.8 L33.7 16.5 L33.8 17.1 L33.8 17.7 L33.7 18.3 L33.5 18.9 L33.1 19.4 L32.6 19.9 L32.0 20.3 L31.3 20.7 L30.6 21.1 L29.7 21.3 L28.8 21.5 L27.8 21.6 L26.7 21.6 L25.6 21.6 L24.5 21.5 L23.3 21.3 L22.2 21.0 L21.0 20.6 L19.9 20.2 L18.8 19.6 L17.7 19.1 L16.7 18.4 L15.8 17.7 L14.9 16.9 L14.1 16.1 L13.4 15.3 L12.8 14.4 L12.3 13.5 L11.8 12.6 L11.5 11.7 L11.3 10.8 L11.2 9.9 L11.2 9.1 L11.3 8.2 L11.5 7.4 L11.8 6.7 L12.2 6.0 L12.7 5.4 L13.2 4.8 L13.9 4.4 L14.5 4.0 L15.3 3.7 L16.0 3.4 L16.8 3.3 L17.6 3.3 L18.5 3.3 L19.3 3.5 L20.1 3.7 L20.9 4.1 L21.6 4.5 L22.3 5.0 L22.9 5.6 L23.5 6.2 L24.0 6.9 L24.4 7.7 L24.7 8.5 L25.0 9.4 L25.1 10.3 L25.1 11.3 L25.1 12.2 L24.9 13.2 L24.7 14.1 L24.3 15.1 L23.8 16.0 L23.3 16.9 L22.6 17.8 L21.9 18.6 L21.1 19.4 L20.2 20.1 L19.3 20.8 L18.4 21.4 L17.4 21.9 L16.3 22.3 L15.3 22.7 L14.3 22.9 L13.2 23.1 L12.2 23.2 L11.2 23.2 L10.3 23.1 L9.4 23.0 L8.6 22.7 L7.9 22.4 L7.3 22.1 L6.7 21.6 L6.3 21.1 L5.9 20.6 L5.7 20.0 L5.6 19.3 L5.6 18.7 L5.7 18.0 L5.9 17.3 L6.3 16.6 L6.8 15.9 L7.4 15.3 L8.1 14.6 L8.9 14.0 L9.9 13.4 L10.9 12.9 L12.0 12.4 L13.1 11.9 L14.4 11.6 L15.6 11.3 L16.9 11.0 L18.3 10.8Z" fill="none" stroke="#e0e0e0" stroke-width="2.6"/></svg>
<div class="a" style="left:781px;top:610px;width:44px;height:32px;border:2px solid #1aa8f4;background:#fff"></div>
<svg style="left:784px;top:613px;overflow:hidden" width="38" height="26" viewBox="0 0 38 26"><rect width="38" height="26" fill="#fff"/><path d="M18.3 10.8 L19.6 10.7 L21.0 10.7 L22.3 10.7 L23.6 10.9 L24.9 11.1 L26.2 11.3 L27.3 11.6 L28.4 12.0 L29.5 12.4 L30.4 12.9 L31.2 13.4 L32.0 14.0 L32.6 14.6 L33.1 15.2 L33.5 15.8 L33.7 16.5 L33.8 17.1 L33.8 17.7 L33.7 18.3 L33.5 18.9 L33.1 19.4 L32.6 19.9 L32.0 20.3 L31.3 20.7 L30.6 21.1 L29.7 21.3 L28.8 21.5 L27.8 21.6 L26.7 21.6 L25.6 21.6 L24.5 21.5 L23.3 21.3 L22.2 21.0 L21.0 20.6 L19.9 20.2 L18.8 19.6 L17.7 19.1 L16.7 18.4 L15.8 17.7 L14.9 16.9 L14.1 16.1 L13.4 15.3 L12.8 14.4 L12.3 13.5 L11.8 12.6 L11.5 11.7 L11.3 10.8 L11.2 9.9 L11.2 9.1 L11.3 8.2 L11.5 7.4 L11.8 6.7 L12.2 6.0 L12.7 5.4 L13.2 4.8 L13.9 4.4 L14.5 4.0 L15.3 3.7 L16.0 3.4 L16.8 3.3 L17.6 3.3 L18.5 3.3 L19.3 3.5 L20.1 3.7 L20.9 4.1 L21.6 4.5 L22.3 5.0 L22.9 5.6 L23.5 6.2 L24.0 6.9 L24.4 7.7 L24.7 8.5 L25.0 9.4 L25.1 10.3 L25.1 11.3 L25.1 12.2 L24.9 13.2 L24.7 14.1 L24.3 15.1 L23.8 16.0 L23.3 16.9 L22.6 17.8 L21.9 18.6 L21.1 19.4 L20.2 20.1 L19.3 20.8 L18.4 21.4 L17.4 21.9 L16.3 22.3 L15.3 22.7 L14.3 22.9 L13.2 23.1 L12.2 23.2 L11.2 23.2 L10.3 23.1 L9.4 23.0 L8.6 22.7 L7.9 22.4 L7.3 22.1 L6.7 21.6 L6.3 21.1 L5.9 20.6 L5.7 20.0 L5.6 19.3 L5.6 18.7 L5.7 18.0 L5.9 17.3 L6.3 16.6 L6.8 15.9 L7.4 15.3 L8.1 14.6 L8.9 14.0 L9.9 13.4 L10.9 12.9 L12.0 12.4 L13.1 11.9 L14.4 11.6 L15.6 11.3 L16.9 11.0 L18.3 10.8Z" fill="none" stroke="#8a8080" stroke-width="4.4"/><path d="M18.3 10.8 L19.6 10.7 L21.0 10.7 L22.3 10.7 L23.6 10.9 L24.9 11.1 L26.2 11.3 L27.3 11.6 L28.4 12.0 L29.5 12.4 L30.4 12.9 L31.2 13.4 L32.0 14.0 L32.6 14.6 L33.1 15.2 L33.5 15.8 L33.7 16.5 L33.8 17.1 L33.8 17.7 L33.7 18.3 L33.5 18.9 L33.1 19.4 L32.6 19.9 L32.0 20.3 L31.3 20.7 L30.6 21.1 L29.7 21.3 L28.8 21.5 L27.8 21.6 L26.7 21.6 L25.6 21.6 L24.5 21.5 L23.3 21.3 L22.2 21.0 L21.0 20.6 L19.9 20.2 L18.8 19.6 L17.7 19.1 L16.7 18.4 L15.8 17.7 L14.9 16.9 L14.1 16.1 L13.4 15.3 L12.8 14.4 L12.3 13.5 L11.8 12.6 L11.5 11.7 L11.3 10.8 L11.2 9.9 L11.2 9.1 L11.3 8.2 L11.5 7.4 L11.8 6.7 L12.2 6.0 L12.7 5.4 L13.2 4.8 L13.9 4.4 L14.5 4.0 L15.3 3.7 L16.0 3.4 L16.8 3.3 L17.6 3.3 L18.5 3.3 L19.3 3.5 L20.1 3.7 L20.9 4.1 L21.6 4.5 L22.3 5.0 L22.9 5.6 L23.5 6.2 L24.0 6.9 L24.4 7.7 L24.7 8.5 L25.0 9.4 L25.1 10.3 L25.1 11.3 L25.1 12.2 L24.9 13.2 L24.7 14.1 L24.3 15.1 L23.8 16.0 L23.3 16.9 L22.6 17.8 L21.9 18.6 L21.1 19.4 L20.2 20.1 L19.3 20.8 L18.4 21.4 L17.4 21.9 L16.3 22.3 L15.3 22.7 L14.3 22.9 L13.2 23.1 L12.2 23.2 L11.2 23.2 L10.3 23.1 L9.4 23.0 L8.6 22.7 L7.9 22.4 L7.3 22.1 L6.7 21.6 L6.3 21.1 L5.9 20.6 L5.7 20.0 L5.6 19.3 L5.6 18.7 L5.7 18.0 L5.9 17.3 L6.3 16.6 L6.8 15.9 L7.4 15.3 L8.1 14.6 L8.9 14.0 L9.9 13.4 L10.9 12.9 L12.0 12.4 L13.1 11.9 L14.4 11.6 L15.6 11.3 L16.9 11.0 L18.3 10.8Z" fill="none" stroke="#dcdcdc" stroke-width="2.6"/></svg>
<svg style="left:828px;top:613px;overflow:hidden" width="38" height="26" viewBox="0 0 38 26"><rect width="38" height="26" fill="#000"/><path d="M18.3 10.8 L19.6 10.7 L21.0 10.7 L22.3 10.7 L23.6 10.9 L24.9 11.1 L26.2 11.3 L27.3 11.6 L28.4 12.0 L29.5 12.4 L30.4 12.9 L31.2 13.4 L32.0 14.0 L32.6 14.6 L33.1 15.2 L33.5 15.8 L33.7 16.5 L33.8 17.1 L33.8 17.7 L33.7 18.3 L33.5 18.9 L33.1 19.4 L32.6 19.9 L32.0 20.3 L31.3 20.7 L30.6 21.1 L29.7 21.3 L28.8 21.5 L27.8 21.6 L26.7 21.6 L25.6 21.6 L24.5 21.5 L23.3 21.3 L22.2 21.0 L21.0 20.6 L19.9 20.2 L18.8 19.6 L17.7 19.1 L16.7 18.4 L15.8 17.7 L14.9 16.9 L14.1 16.1 L13.4 15.3 L12.8 14.4 L12.3 13.5 L11.8 12.6 L11.5 11.7 L11.3 10.8 L11.2 9.9 L11.2 9.1 L11.3 8.2 L11.5 7.4 L11.8 6.7 L12.2 6.0 L12.7 5.4 L13.2 4.8 L13.9 4.4 L14.5 4.0 L15.3 3.7 L16.0 3.4 L16.8 3.3 L17.6 3.3 L18.5 3.3 L19.3 3.5 L20.1 3.7 L20.9 4.1 L21.6 4.5 L22.3 5.0 L22.9 5.6 L23.5 6.2 L24.0 6.9 L24.4 7.7 L24.7 8.5 L25.0 9.4 L25.1 10.3 L25.1 11.3 L25.1 12.2 L24.9 13.2 L24.7 14.1 L24.3 15.1 L23.8 16.0 L23.3 16.9 L22.6 17.8 L21.9 18.6 L21.1 19.4 L20.2 20.1 L19.3 20.8 L18.4 21.4 L17.4 21.9 L16.3 22.3 L15.3 22.7 L14.3 22.9 L13.2 23.1 L12.2 23.2 L11.2 23.2 L10.3 23.1 L9.4 23.0 L8.6 22.7 L7.9 22.4 L7.3 22.1 L6.7 21.6 L6.3 21.1 L5.9 20.6 L5.7 20.0 L5.6 19.3 L5.6 18.7 L5.7 18.0 L5.9 17.3 L6.3 16.6 L6.8 15.9 L7.4 15.3 L8.1 14.6 L8.9 14.0 L9.9 13.4 L10.9 12.9 L12.0 12.4 L13.1 11.9 L14.4 11.6 L15.6 11.3 L16.9 11.0 L18.3 10.8Z" fill="none" stroke="#fff" stroke-width="4.4"/><path d="M18.3 10.8 L19.6 10.7 L21.0 10.7 L22.3 10.7 L23.6 10.9 L24.9 11.1 L26.2 11.3 L27.3 11.6 L28.4 12.0 L29.5 12.4 L30.4 12.9 L31.2 13.4 L32.0 14.0 L32.6 14.6 L33.1 15.2 L33.5 15.8 L33.7 16.5 L33.8 17.1 L33.8 17.7 L33.7 18.3 L33.5 18.9 L33.1 19.4 L32.6 19.9 L32.0 20.3 L31.3 20.7 L30.6 21.1 L29.7 21.3 L28.8 21.5 L27.8 21.6 L26.7 21.6 L25.6 21.6 L24.5 21.5 L23.3 21.3 L22.2 21.0 L21.0 20.6 L19.9 20.2 L18.8 19.6 L17.7 19.1 L16.7 18.4 L15.8 17.7 L14.9 16.9 L14.1 16.1 L13.4 15.3 L12.8 14.4 L12.3 13.5 L11.8 12.6 L11.5 11.7 L11.3 10.8 L11.2 9.9 L11.2 9.1 L11.3 8.2 L11.5 7.4 L11.8 6.7 L12.2 6.0 L12.7 5.4 L13.2 4.8 L13.9 4.4 L14.5 4.0 L15.3 3.7 L16.0 3.4 L16.8 3.3 L17.6 3.3 L18.5 3.3 L19.3 3.5 L20.1 3.7 L20.9 4.1 L21.6 4.5 L22.3 5.0 L22.9 5.6 L23.5 6.2 L24.0 6.9 L24.4 7.7 L24.7 8.5 L25.0 9.4 L25.1 10.3 L25.1 11.3 L25.1 12.2 L24.9 13.2 L24.7 14.1 L24.3 15.1 L23.8 16.0 L23.3 16.9 L22.6 17.8 L21.9 18.6 L21.1 19.4 L20.2 20.1 L19.3 20.8 L18.4 21.4 L17.4 21.9 L16.3 22.3 L15.3 22.7 L14.3 22.9 L13.2 23.1 L12.2 23.2 L11.2 23.2 L10.3 23.1 L9.4 23.0 L8.6 22.7 L7.9 22.4 L7.3 22.1 L6.7 21.6 L6.3 21.1 L5.9 20.6 L5.7 20.0 L5.6 19.3 L5.6 18.7 L5.7 18.0 L5.9 17.3 L6.3 16.6 L6.8 15.9 L7.4 15.3 L8.1 14.6 L8.9 14.0 L9.9 13.4 L10.9 12.9 L12.0 12.4 L13.1 11.9 L14.4 11.6 L15.6 11.3 L16.9 11.0 L18.3 10.8Z" fill="none" stroke="#fff" stroke-width="2.6"/></svg>
<svg style="left:661px;top:667px" width="18" height="18" viewBox="0 0 18 18"><defs><linearGradient id="og" x1="0" y1="0" x2="0" y2="1"><stop offset="0" stop-color="#fff"/><stop offset="1" stop-color="#dcdcdc"/></linearGradient></defs><circle cx="8.5" cy="8.5" r="7.5" fill="url(#og)" stroke="#a8a8a8"/><path d="M5.5 8L8.5 5L11.5 8M5.5 12L8.5 9L11.5 12" fill="none" stroke="#111" stroke-width="1.4"/></svg>
<div class="t" style="left:683.5px;top:669.84px;font-size:12px;color:#000;">Описание</div>
<div class="a" style="left:745px;top:675px;width:283px;height:1px;background:#9a9a9a"></div>
<div class="t" style="left:649.5px;top:700.53px;font-size:10px;color:#000;letter-spacing:0.25px">Нажмите клавишу "P", чтобы переключить просмотр уточнений края.</div>
<div class="t" style="left:649.5px;top:713.03px;font-size:10px;color:#000;letter-spacing:0.25px">Нажмите клавишу "F", чтобы перелистать режимы просмотра, и клавишу "X",</div>
<div class="t" style="left:649.5px;top:724.53px;font-size:10px;color:#000;letter-spacing:0.25px">чтобы временно просмотреть изображение.</div>
<div class="btn" style="top:327px;border-color:#2ac8d0;box-shadow:inset 0 0 0 1px #7ae0e8">OK</div>
<div class="btn" style="top:355px">Отмена</div>
<div class="btn" style="top:383px">По умолчанию</div>
<div class="a" style="left:885px;top:416px;width:13px;height:13px;border:1px solid #8cb8d8;background:linear-gradient(135deg,#e4f0f8,#fafcfe)"></div>
<svg style="left:887px;top:418px" width="9" height="9" viewBox="0 0 9 9"><path d="M1 4.5L3.5 7.5L8 1" fill="none" stroke="#1c5ca8" stroke-width="1.8"/></svg>
<div class="t" style="left:900px;top:417.84px;font-size:12px;color:#000;letter-spacing:0.25px">Контрольный просмотр</div>
<svg style="left:940px;top:448px" width="16" height="16" viewBox="0 0 16 16"><defs><radialGradient id="zg" cx="40%" cy="35%" r="60%"><stop offset="0" stop-color="#fff"/><stop offset="1" stop-color="#b0b0b0"/></radialGradient></defs><circle cx="6" cy="6" r="4.5" fill="url(#zg)" stroke="#333" stroke-width="1.4"/><path d="M9.5 9.5L14.5 14.5" stroke="#111" stroke-width="2.4"/></svg>
<div class="a" style="left:961px;top:446px;width:26px;height:18px;border:1px solid #1c88b0;border-radius:3px;background:linear-gradient(#9ee0f4,#3cb0d8)"></div>
<svg style="left:965px;top:447px" width="18" height="17" viewBox="0 0 18 17"><path d="M6 16.2C4.5 14.5 3 13 1.6 10.6C1 9.6 1.6 8.6 2.6 9L5 11.2L3.6 4.6C3.3 3.4 5 3 5.4 4.2L7 8.6L6.6 2.4C6.5 1.1 8.3 1 8.5 2.3L9.4 8.2L10.4 2.2C10.6 1 12.3 1.2 12.2 2.5L11.8 8.6L13.6 4.4C14.1 3.3 15.7 3.8 15.3 5L13.9 10.6C13.4 13 13 14.5 11.8 16.2Z" fill="#fafafa" stroke="#222" stroke-width="0.9"/></svg>

<div class="a" style="left:1270px;top:61px;width:1px;height:929px;background:#4a4a4a"></div>
<div class="a" style="left:1271px;top:61px;width:2px;height:929px;background:#e2e2e2"></div>
<div class="a" style="left:1273px;top:0;width:1px;height:990px;background:#eeeeee"></div>
<div class="a" style="left:1274px;top:0;width:1px;height:990px;background:#8a8a8a"></div>
</body></html>
